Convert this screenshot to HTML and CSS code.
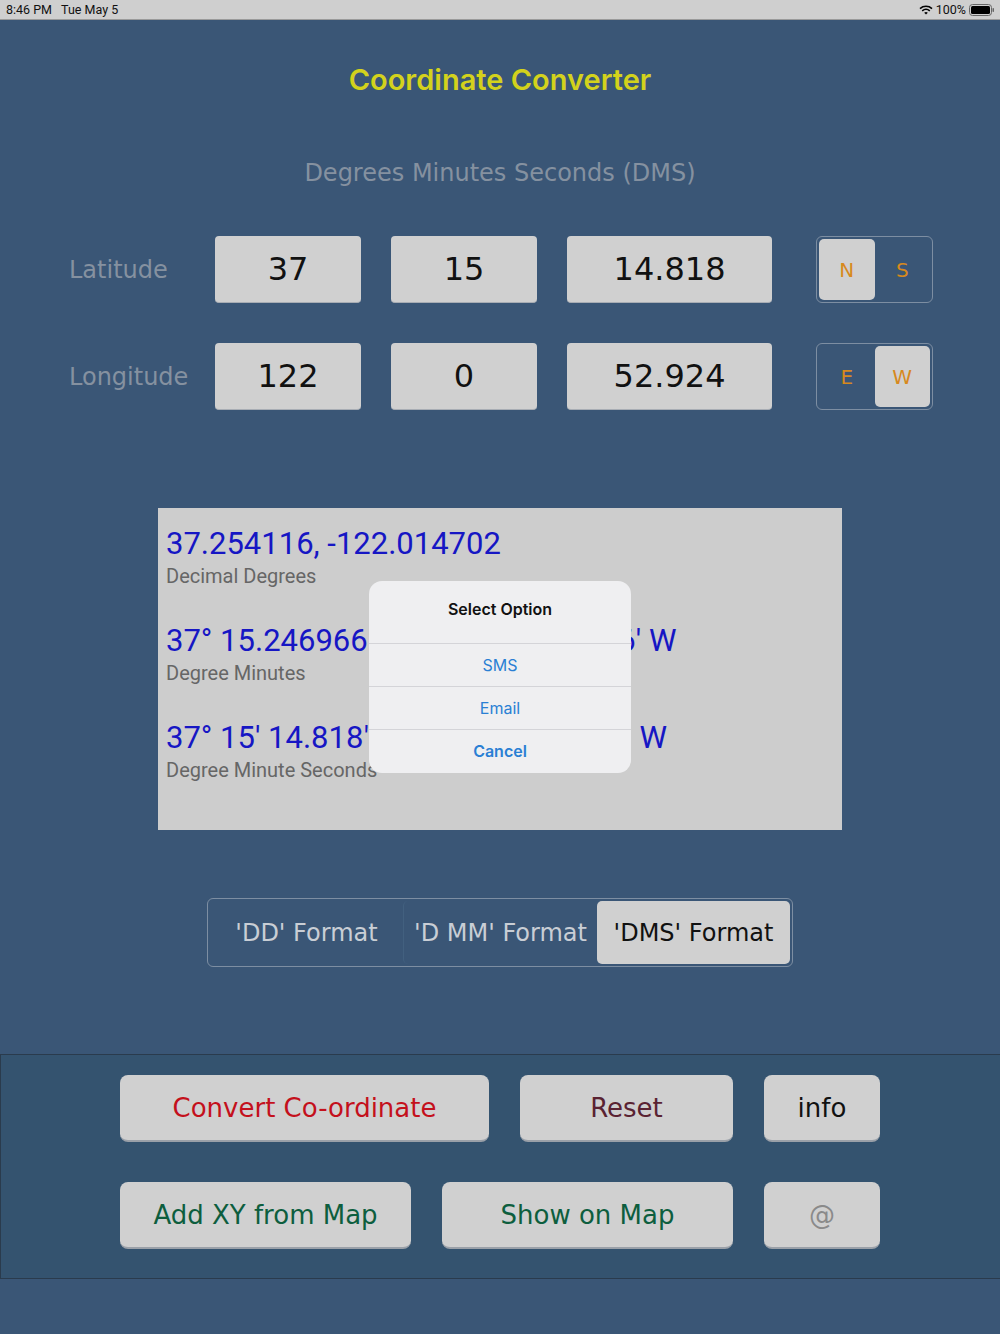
FILE: index.html
```html
<!doctype html>
<html lang="en">
<head>
  <meta charset="utf-8">
  <title>Coordinate Converter</title>
  <meta name="viewport" content="width=device-width, initial-scale=1">
  <link rel="stylesheet" href="styles.css">
</head>
<body>
<div class="statusBar">
  <span class="time">8:46 PM&nbsp;&nbsp; Tue May 5</span>
  <span class="sysIcons">
    <svg class="wifi" width="14" height="10" viewBox="0 0 14 10">
      <path d="M1 3.6 A9 9 0 0 1 13 3.6" fill="none" stroke="#000" stroke-width="1.6"/>
      <path d="M3.2 5.8 A6 6 0 0 1 10.8 5.8" fill="none" stroke="#000" stroke-width="1.6"/>
      <path d="M7 9.6 L5.2 7.8 A2.6 2.6 0 0 1 8.8 7.8 Z" fill="#000"/>
    </svg>
    <span class="battText">100%</span>
    <svg class="battery" width="26" height="12" viewBox="0 0 26 12">
      <rect x="0.5" y="0.5" width="22" height="11" rx="3" fill="none" stroke="#666"/>
      <rect x="2" y="2" width="19" height="8" rx="1.5" fill="#000"/>
      <rect x="23.5" y="4" width="1.5" height="4" rx="0.7" fill="#666"/>
    </svg>
  </span>
</div>

<h1 class="appTitle">Coordinate Converter</h1>
<p class="formatName">Degrees Minutes Seconds (DMS)</p>

<!-- 纬度 / 经度 输入行 -->
<div class="coordRow">
  <span class="rowLabel">Latitude</span>
  <div class="numBox">37</div>
  <div class="numBox">15</div>
  <div class="numBox wide">14.818</div>
  <div class="hemi">
    <span class="hemiSeg on">N</span>
    <span class="hemiSeg">S</span>
  </div>
</div>
<div class="coordRow">
  <span class="rowLabel">Longitude</span>
  <div class="numBox">122</div>
  <div class="numBox">0</div>
  <div class="numBox wide">52.924</div>
  <div class="hemi">
    <span class="hemiSeg">E</span>
    <span class="hemiSeg on">W</span>
  </div>
</div>

<!-- 结果面板 + 弹出菜单 -->
<div class="results">
  <div class="resItem">
    <div class="resValue">37.254116, -122.014702</div>
    <div class="resCaption">Decimal Degrees</div>
  </div>
  <div class="resItem">
    <div class="resValue">37° 15.246966' N, 122° 0.8820666' W</div>
    <div class="resCaption">Degree Minutes</div>
  </div>
  <div class="resItem">
    <div class="resValue">37° 15' 14.818" N,&nbsp; 122° 0' 52.924" W</div>
    <div class="resCaption">Degree Minute Seconds</div>
  </div>

  <div class="alertBox">
    <div class="alertTitle">Select Option</div>
    <div class="alertBtn">SMS</div>
    <div class="alertBtn">Email</div>
    <div class="alertBtn cancel">Cancel</div>
  </div>
</div>

<div class="formatSeg">
  <span class="fmt">'DD' Format</span>
  <span class="fmt">'D MM' Format</span>
  <span class="fmt on">'DMS' Format</span>
</div>

<!-- 底部按钮 -->
<div class="actions">
  <div class="actRow">
    <div class="btn red w369">Convert Co-ordinate</div>
    <div class="btn maroon w213">Reset</div>
    <div class="btn black w116">info</div>
  </div>
  <div class="actRow">
    <div class="btn green w291">Add XY from Map</div>
    <div class="btn green w291">Show on Map</div>
    <div class="btn grey w116">@</div>
  </div>
</div>
</body>
</html>
```

FILE: styles.css
```css
*{
  padding:0;
  margin:0;
  box-sizing: border-box;
}
body{
  width: 1000px;
  height: 1334px;
  background: #3a5676;
  font-family: "DejaVu Sans", Verdana, sans-serif;
  overflow: hidden;
}
.statusBar{
  height: 20px;
  background: #cfcfcf;
  border-bottom: 1px solid #9a9a9a;
  display: flex;
  align-items: center;
  justify-content: space-between;
  padding: 0 5px 0 6px;
  font-family: Roboto, "Liberation Sans", sans-serif;
  font-size: 12.5px;
  color: #111;
}
.sysIcons{
  display: flex;
  align-items: center;
  gap: 3px;
}
.appTitle{
  font-family: Inter, Roboto, sans-serif;
  font-weight: 600;
  font-size: 29px;
  color: #d3d21c;
  text-align: center;
  line-height: 34px;
  margin-top: 43px;
}
.formatName{
  font-size: 24px;
  color: #8591a0;
  text-align: center;
  line-height: 30px;
  margin-top: 61px;
}
.coordRow{
  display: flex;
  align-items: center;
  height: 67px;
  padding-left: 69px;
  margin-top: 48px;
}
.coordRow + .coordRow{
  margin-top: 40px;
}
.rowLabel{
  width: 146px;
  font-size: 24px;
  color: #8591a0;
}
.numBox{
  width: 146px;
  height: 67px;
  margin-right: 30px;
  background: #d0d0d0;
  border-radius: 4px;
  border-bottom: 1px solid #a8adb4;
  font-size: 32px;
  color: #111;
  display: flex;
  align-items: center;
  justify-content: center;
}
.numBox.wide{
  width: 205px;
  margin-right: 44px;
}
.hemi{
  width: 117px;
  height: 67px;
  border: 1px solid #7d8ea2;
  border-radius: 6px;
  display: flex;
  padding: 2px;
}
.hemiSeg{
  flex: 1;
  display: flex;
  align-items: center;
  justify-content: center;
  font-size: 20px;
  color: #d7891d;
  border-radius: 5px;
}
.hemiSeg.on{
  background: #d0d0d0;
}
.results{
  position: relative;
  width: 684px;
  height: 322px;
  margin: 98px 0 0 158px;
  background: #cdcdcd;
  padding: 19px 0 0 8px;
  font-family: Roboto, "Liberation Sans", sans-serif;
}
.resItem{
  height: 97px;
}
.resValue{
  font-size: 31px;
  line-height: 34px;
  color: #1616c4;
  white-space: nowrap;
}
.resCaption{
  font-size: 20px;
  line-height: 22px;
  margin-top: 4px;
  color: #666;
}
.alertBox{
  position: absolute;
  left: 211px;
  top: 73px;
  width: 262px;
  height: 192px;
  background: #efeff1;
  border-radius: 13px;
  overflow: hidden;
  font-family: Inter, Roboto, sans-serif;
}
.alertTitle{
  height: 62px;
  padding-top: 18px;
  text-align: center;
  font-size: 16px;
  font-weight: 600;
  color: #111;
}
.alertBtn{
  height: 43px;
  border-top: 1px solid #d4d4d8;
  display: flex;
  align-items: center;
  justify-content: center;
  font-size: 16px;
  color: #2a7fd4;
}
.alertBtn.cancel{
  font-weight: 600;
}
.formatSeg{
  display: flex;
  width: 586px;
  height: 69px;
  margin: 68px 0 0 207px;
  border: 1px solid #7d8ea2;
  border-radius: 6px;
  padding: 2px;
}
.fmt{
  flex: 1;
  display: flex;
  align-items: center;
  justify-content: center;
  font-size: 24px;
  color: #c9ced5;
  white-space: nowrap;
  border-radius: 5px;
}
.fmt + .fmt{
  border-left: 1px solid #42607f;
}
.fmt.on{
  background: #d0d0d0;
  color: #111;
  border-left: none;
}
.actions{
  margin-top: 87px;
  height: 225px;
  width: 1001px;
  background: #34536f;
  border: 1px solid #2a3b4d;
  border-right: none;
  padding: 20px 0 0 119px;
}
.actRow{
  display: flex;
  gap: 31px;
  height: 67px;
}
.actRow + .actRow{
  margin-top: 40px;
}
.btn{
  height: 67px;
  background: #d0d0d0;
  border-radius: 8px;
  border-bottom: 2px solid #9aa0a8;
  display: flex;
  align-items: center;
  justify-content: center;
  font-size: 26px;
  white-space: nowrap;
}
.w369{ width: 369px; }
.w213{ width: 213px; }
.w116{ width: 116px; }
.w291{ width: 291px; }
.red{ color: #c4101c; }
.maroon{ color: #5a2232; }
.black{ color: #111; }
.green{ color: #0d5e3e; }
.grey{ color: #8a8a8a; }
```
